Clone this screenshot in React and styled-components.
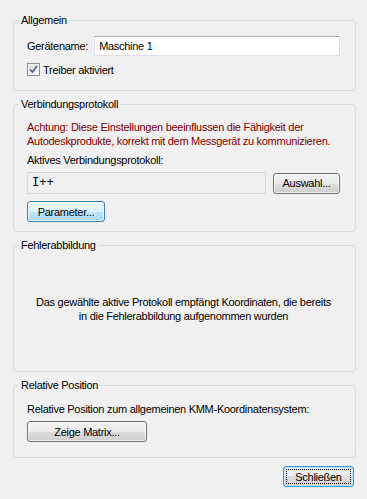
import React from 'react'
import styled, { createGlobalStyle } from 'styled-components'

const Global = createGlobalStyle`
  html, body {
    margin: 0;
    padding: 0;
    background: #f0f0f0;
  }
  body {
    font-family: 'Liberation Sans', Arial, sans-serif;
    font-size: 11px;
    letter-spacing: -0.28px;
    color: #000;
  }
`

const Dialog = styled.div`
  width: 367px;
  height: 499px;
  box-sizing: border-box;
  padding: 14px 11px 0 13px;
  background: #f0f0f0;
  white-space: nowrap;
`

const Group = styled.fieldset`
  margin: ${p => (p.$first ? '0' : '7px')} 0 0 0;
  padding: ${p => p.$pad || '9px 15px 14px 13px'};
  border: 1px solid #d5dfe5;
  border-radius: 3px;
  min-width: 0;
  legend {
    margin-left: -8px;
    padding: 0 2px;
    line-height: 13px;
    font-size: 11px;
  }
`

const Row = styled.div`
  display: flex;
  align-items: center;
  gap: ${p => p.$gap || 6}px;
  margin-top: ${p => p.$mt || 0}px;
`

const Text = styled.div`
  line-height: 14px;
  margin-top: ${p => p.$mt || 0}px;
  color: ${p => (p.$warn ? '#800000' : '#000')};
  text-align: ${p => (p.$center ? 'center' : 'left')};
`

const TextBox = styled.div`
  box-sizing: border-box;
  flex: ${p => (p.$grow ? '1' : 'none')};
  height: ${p => p.$h || 20}px;
  padding: 0 4px;
  display: flex;
  align-items: center;
  background: ${p => (p.$readonly ? '#f0f0f0' : '#fff')};
  border: 1px solid ${p => (p.$readonly ? '#dcdcdc' : '#dbdfe6')};
  border-top-color: ${p => (p.$readonly ? '#d2d2d2' : '#abadb3')};
  border-left-color: ${p => (p.$readonly ? '#dcdcdc' : '#e2e3ea')};
  font-family: ${p => (p.$mono ? "'Liberation Mono', 'Courier New', monospace" : 'inherit')};
  font-size: ${p => (p.$mono ? '12px' : '11px')};
  letter-spacing: ${p => (p.$mono ? '0' : 'inherit')};
`

const Button = styled.button`
  box-sizing: border-box;
  width: ${p => p.$w}px;
  height: ${p => p.$h || 21}px;
  padding: 0;
  font: inherit;
  letter-spacing: inherit;
  color: #000;
  border-radius: 3px;
  border: 1px solid ${p => (p.$hot ? '#3c7fb1' : p.$default ? '#3399dd' : '#707070')};
  background: ${p =>
    p.$hot
      ? 'linear-gradient(#eaf6fd 0%, #d9f0fc 50%, #bee6fd 50%, #a7d9f5 100%)'
      : 'linear-gradient(#f2f2f2 0%, #ebebeb 50%, #dddddd 50%, #cfcfcf 100%)'};
  box-shadow: inset 0 0 0 1px ${p => (p.$default ? '#bfe4f8' : 'rgba(255,255,255,0.7)')};
  position: relative;
  &::after {
    content: '';
    display: ${p => (p.$default ? 'block' : 'none')};
    position: absolute;
    inset: 2px;
    border: 1px dotted #000;
  }
`

const Check = styled.span`
  box-sizing: border-box;
  width: 13px;
  height: 13px;
  border: 1px solid #8f8f8f;
  background: linear-gradient(135deg, #dcdcdc, #fbfbfb);
  box-shadow: inset 0 0 0 1px #f4f4f4;
  display: inline-flex;
  align-items: center;
  justify-content: center;
`

const Footer = styled.div`
  display: flex;
  justify-content: flex-end;
  margin-top: 8px;
  padding-right: 2px;
`

export default function App() {
  return (
    <>
      <Global />
      <Dialog>
        <Group $first>
          <legend>Allgemein</legend>
          <Row $gap={6}>
            <span>Gerätename:</span>
            <TextBox $grow>Maschine 1</TextBox>
          </Row>
          <Row $gap={3} $mt={7}>
            <Check>
              <svg width="9" height="9" viewBox="0 0 9 9">
                <path d="M1 4.5 L3.5 7 L8 1" fill="none" stroke="#4a5f97" strokeWidth="1.7" />
              </svg>
            </Check>
            <span>Treiber aktiviert</span>
          </Row>
        </Group>

        <Group $pad="9px 15px 9px 13px">
          <legend>Verbindungsprotokoll</legend>
          <Text $warn>
            Achtung: Diese Einstellungen beeinflussen die Fähigkeit der
            <br />
            Autodeskprodukte, korrekt mit dem Messgerät zu kommunizieren.
          </Text>
          <Text $mt={5}>Aktives Verbindungsprotokoll:</Text>
          <Row $gap={7} $mt={5}>
            <TextBox $grow $readonly $mono $h={22}>I++</TextBox>
            <Button $w={67}>Auswahl...</Button>
          </Row>
          <Row $mt={7}>
            <Button $w={78} $hot>Parameter...</Button>
          </Row>
        </Group>

        <Group $pad="43px 15px 48px 13px">
          <legend>Fehlerabbildung</legend>
          <Text $center>
            Das gewählte aktive Protokoll empfängt Koordinaten, die bereits
            <br />
            in die Fehlerabbildung aufgenommen wurden
          </Text>
        </Group>

        <Group $pad="10px 15px 15px 13px">
          <legend>Relative Position</legend>
          <Text>Relative Position zum allgemeinen KMM-Koordinatensystem:</Text>
          <Row $mt={5}>
            <Button $w={120} $h={21}>Zeige Matrix...</Button>
          </Row>
        </Group>

        <Footer>
          <Button $w={71} $default>Schließen</Button>
        </Footer>
      </Dialog>
    </>
  )
}
